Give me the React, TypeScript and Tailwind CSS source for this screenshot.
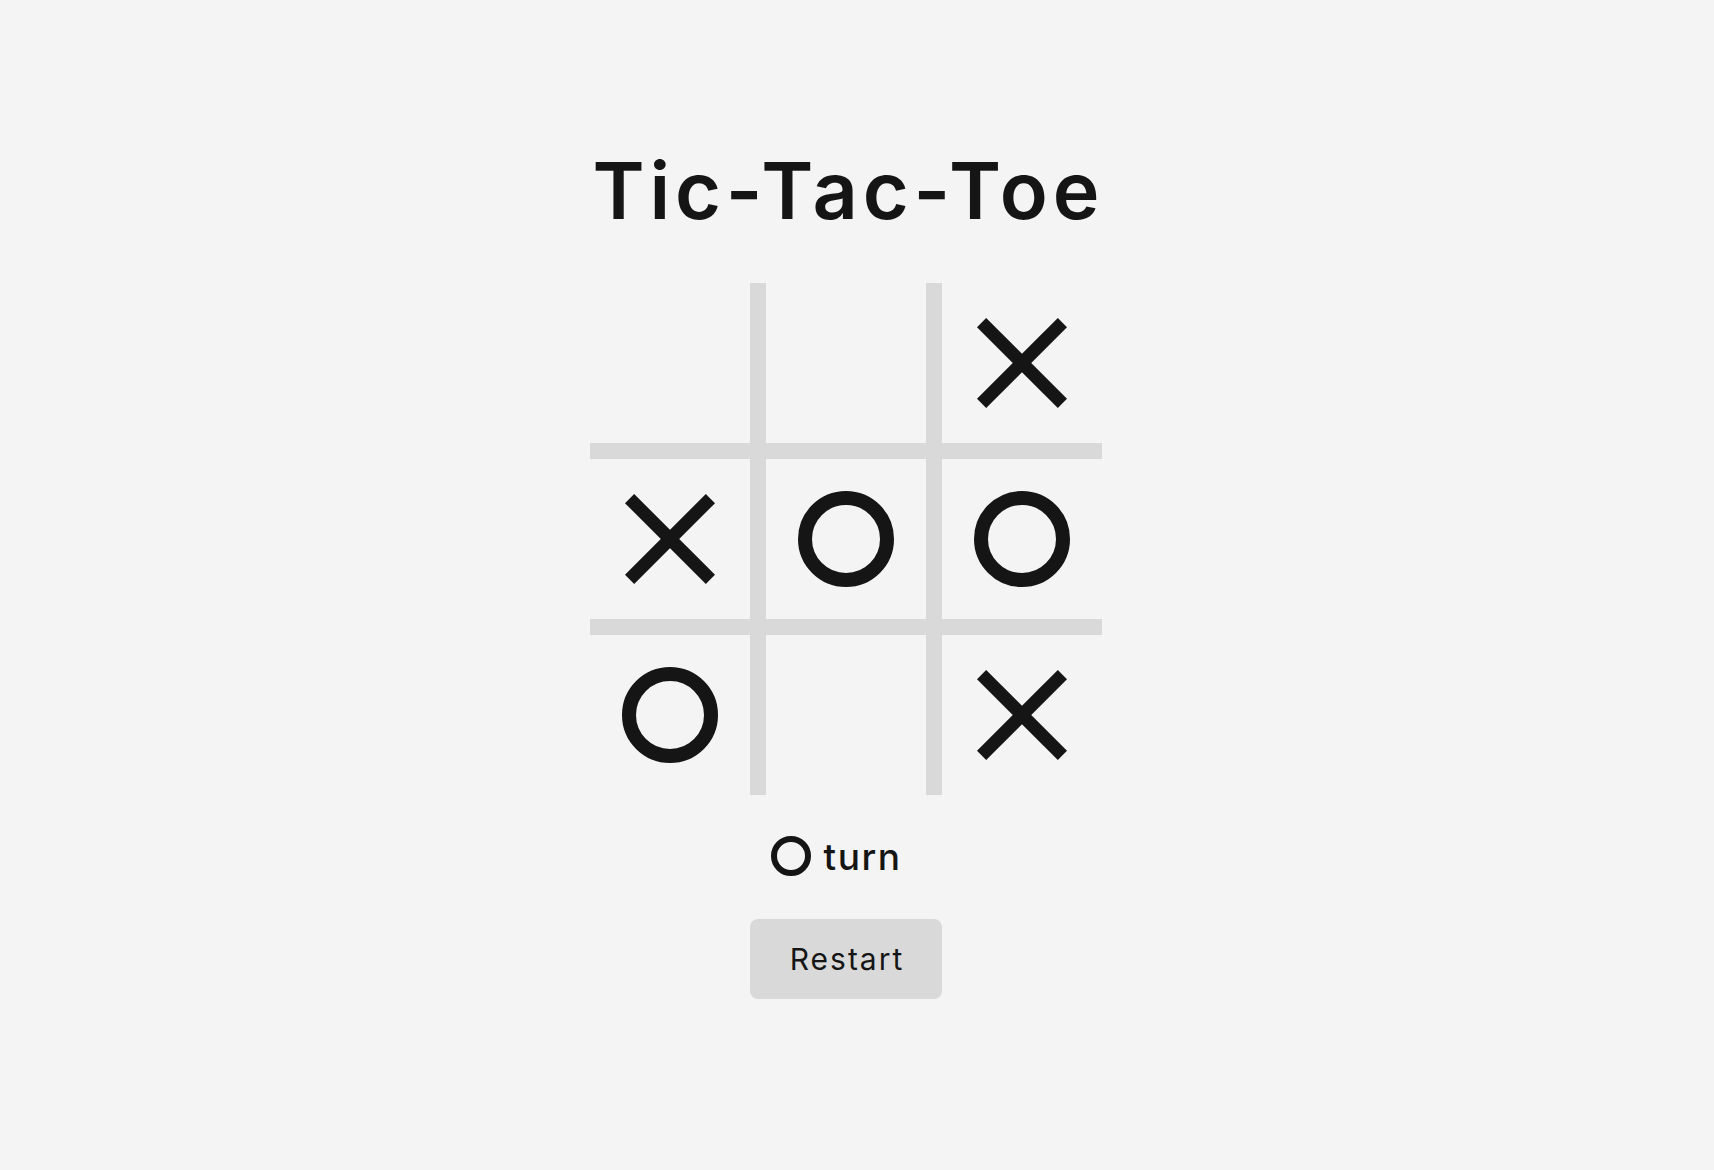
import React from "react";

type Mark = "X" | "O" | "";

const board: Mark[] = ["", "", "X", "X", "O", "O", "O", "", "X"];

const XMark = () => (
  <svg width="90" height="90" viewBox="0 0 90 90">
    <line x1="4.6" y1="4.6" x2="85.4" y2="85.4" stroke="#151515" strokeWidth="13" />
    <line x1="85.4" y1="4.6" x2="4.6" y2="85.4" stroke="#151515" strokeWidth="13" />
  </svg>
);

const OMark = () => <div className="w-[96px] h-[96px] rounded-full border-[14px] border-[#151515]" />;

export default function App() {
  return (
    <div
      className="min-h-screen bg-[#f4f4f4] flex flex-col items-center pt-[151px] pr-[22px] text-[#151515]"
      style={{ fontFamily: "Inter, 'Noto Sans', sans-serif" }}
    >
      <h1 className="text-[79px] leading-none font-semibold tracking-[4.8px] pl-[4.8px] mb-[53px]">Tic-Tac-Toe</h1>

      {/* Board */}
      <div className="grid grid-cols-[repeat(3,160px)] grid-rows-[repeat(3,160px)] gap-4 bg-[#d9d9d9]">
        {board.map((cell, i) => (
          <div key={i} className="bg-[#f4f4f4] flex items-center justify-center">
            {cell === "X" && <XMark />}
            {cell === "O" && <OMark />}
          </div>
        ))}
      </div>

      {/* Turn */}
      <div className="mt-[41px] mr-[20px] flex items-center gap-[13px] h-[40px]">
        <div className="w-[40px] h-[40px] rounded-full border-[6px] border-[#151515]" />
        <span className="text-[37px] leading-none font-medium tracking-[1.5px]">turn</span>
      </div>

      <button className="mt-[43px] w-[192px] h-[80px] rounded-lg bg-[#d9d9d9] text-[30px] tracking-[2px] pl-[2px]">
        Restart
      </button>
    </div>
  );
}
